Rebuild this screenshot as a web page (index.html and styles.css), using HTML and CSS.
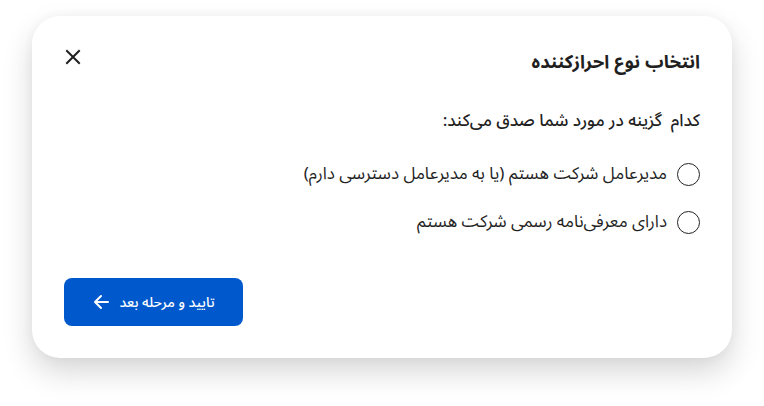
FILE: index.html
```html
<!DOCTYPE html>
<html lang="fa" dir="rtl">
<head>
<meta charset="utf-8">
<link rel="stylesheet" href="styles.css">
</head>
<body>
<div class="stage">
  <div class="card">
    <div class="header">
      <h1 class="title">انتخاب نوع احرازکننده</h1>
      <button class="close" aria-label="بستن">
        <svg width="16" height="16" viewBox="0 0 16 16"><path d="M2 2L14 14M14 2L2 14" stroke="#1f1f1f" stroke-width="2" stroke-linecap="square"/></svg>
      </button>
    </div>
    <p class="question">کدام&nbsp; گزینه در مورد شما صدق می‌کند:</p>
    <div class="options">
      <label class="option"><span class="radio"></span><span class="label">مدیرعامل شرکت هستم (یا به مدیرعامل دسترسی دارم)</span></label>
      <label class="option"><span class="radio"></span><span class="label">دارای معرفی‌نامه رسمی شرکت هستم</span></label>
    </div>
    <div class="footer">
      <button class="primary"><span>تایید و مرحله بعد</span>
        <svg width="18" height="18" viewBox="0 0 18 18"><path d="M16 9H3M9 3L3 9L9 15" fill="none" stroke="#fff" stroke-width="2" stroke-linecap="round" stroke-linejoin="round"/></svg>
      </button>
    </div>
  </div>
</div>
</body>
</html>
```
FILE: styles.css
```css
* { box-sizing: border-box; }
html, body { margin: 0; padding: 0; background: #fff; }
body {
  font-family: "Noto Sans Arabic", "Vazirmatn", "DejaVu Sans", sans-serif;
  color: #1f1f1f;
  width: 764px;
  height: 406px;
  overflow: hidden;
}
.stage {
  padding: 16px 32px 0 32px;
}
.card {
  width: 700px;
  height: 342px;
  background: #fff;
  border-radius: 28px;
  box-shadow: 0 14px 30px rgba(0,0,0,0.16), 0 0 12px rgba(0,0,0,0.04);
  padding: 30px 32px 32px 32px;
  display: flex;
  flex-direction: column;
}
.header {
  display: flex;
  align-items: center;
  justify-content: space-between;
  height: 32px;
}
.title {
  margin: 0;
  font-size: 18.4px;
  font-weight: 700;
}
.close {
  background: none;
  border: 0;
  padding: 0;
  width: 16px;
  height: 16px;
  margin-left: 1px;
  margin-bottom: 10px;
  display: flex;
  cursor: pointer;
}
.question {
  margin: 30px 0 0 0;
  font-size: 17px;
  font-weight: 500;
  line-height: 26px;
}
.options {
  margin-top: 28px;
  display: flex;
  flex-direction: column;
  gap: 24px;
}
.option {
  display: flex;
  align-items: center;
  gap: 10px;
  font-size: 17px;
  height: 24px;
}
.radio {
  width: 23px;
  height: 23px;
  border: 1.5px solid #222;
  border-radius: 50%;
  flex: none;
}
.footer {
  margin-top: auto;
  display: flex;
  justify-content: flex-end;
}
.primary {
  width: 179px;
  height: 48px;
  background: #0059cc;
  color: #fff;
  border: 0;
  border-radius: 8px;
  font-family: inherit;
  font-size: 14px;
  font-weight: 500;
  display: flex;
  align-items: center;
  justify-content: center;
  gap: 9px;
  direction: rtl;
}
```
